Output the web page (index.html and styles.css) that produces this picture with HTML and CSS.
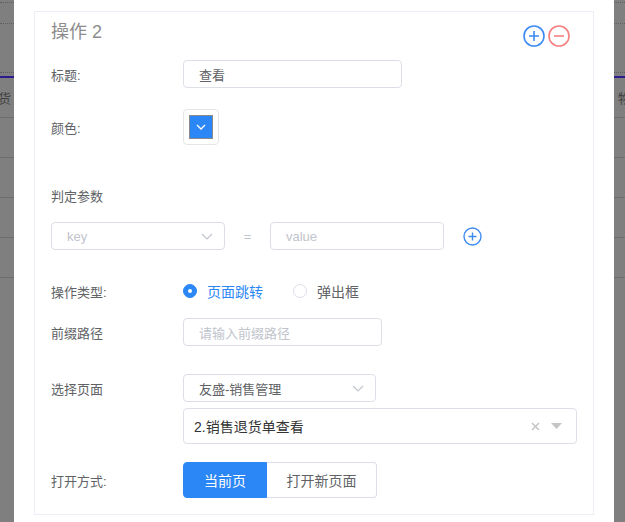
FILE: index.html
```html
<!DOCTYPE html>
<html lang="zh">
<head>
    <meta charset="UTF-8">
    <meta name="viewport" content="width=device-width, initial-scale=1.0">
    <title>操作配置</title>
    <link rel="stylesheet" href="styles.css">
</head>
<body>
<div class="screen">
    <div class="strip strip-left">
        <div class="s-dot s-h3"></div>
        <div class="s-dot s-h20"></div>
        <div class="s-dot s-h48"></div>
        <div class="s-bar"></div>
        <div class="s-row s-text">货</div>
        <div class="s-row"></div>
        <div class="s-row"></div>
        <div class="s-row"></div>
        <div class="s-row"></div>
    </div>

    <div class="modal">
        <div class="card">
            <div class="card-head">
                <span class="card-title">操作 2</span>
                <div class="head-tools">
                    <svg class="circle-btn" width="22" height="22" viewBox="0 0 22 22">
                        <circle cx="11" cy="11" r="10" fill="none" stroke="#3d8bf2" stroke-width="1.6"/>
                        <path d="M11 6v10M6 11h10" stroke="#3d8bf2" stroke-width="1.6"/>
                    </svg>
                    <svg class="circle-btn" width="22" height="22" viewBox="0 0 22 22">
                        <circle cx="11" cy="11" r="10" fill="none" stroke="#f77f7f" stroke-width="1.6"/>
                        <path d="M6 11h10" stroke="#f77f7f" stroke-width="1.6"/>
                    </svg>
                </div>
            </div>

            <div class="row r-title">
                <label class="label">标题:</label>
                <div class="input w-title"><span class="value">查看</span></div>
            </div>

            <div class="row r-color">
                <label class="label">颜色:</label>
                <div class="color-picker">
                    <div class="color-swatch">
                        <svg width="10" height="6" viewBox="0 0 10 6"><path d="M1 1l4 4 4-4" fill="none" stroke="#fff" stroke-width="1.3"/></svg>
                    </div>
                </div>
            </div>

            <div class="row r-param">
                <label class="label">判定参数</label>
            </div>

            <div class="row r-kv">
                <div class="input w-kv">
                    <span class="placeholder">key</span>
                    <svg class="chev" width="12" height="7" viewBox="0 0 12 7"><path d="M1 1l5 5 5-5" fill="none" stroke="#c0c4cc" stroke-width="1.2"/></svg>
                </div>
                <span class="equals">=</span>
                <div class="input w-kv"><span class="placeholder">value</span></div>
                <svg class="add-param" width="19" height="19" viewBox="0 0 19 19">
                    <circle cx="9.5" cy="9.5" r="8.5" fill="none" stroke="#3d8bf2" stroke-width="1.4"/>
                    <path d="M9.5 5.5v8M5.5 9.5h8" stroke="#3d8bf2" stroke-width="1.4"/>
                </svg>
            </div>

            <div class="row r-type">
                <label class="label">操作类型:</label>
                <div class="radio checked"><span class="radio-dot"></span><span>页面跳转</span></div>
                <div class="radio"><span class="radio-dot"></span><span>弹出框</span></div>
            </div>

            <div class="row r-prefix">
                <label class="label">前缀路径</label>
                <div class="input w-prefix"><span class="placeholder">请输入前缀路径</span></div>
            </div>

            <div class="row r-page">
                <label class="label">选择页面</label>
                <div class="input w-page">
                    <span class="value">友盛-销售管理</span>
                    <svg class="chev" width="12" height="7" viewBox="0 0 12 7"><path d="M1 1l5 5 5-5" fill="none" stroke="#c0c4cc" stroke-width="1.2"/></svg>
                </div>
            </div>

            <div class="row r-page2">
                <label class="label"></label>
                <div class="input big w-page2">
                    <span class="value dark">2.销售退货单查看</span>
                    <span class="big-tools">
                        <svg width="9" height="9" viewBox="0 0 9 9"><path d="M1 1l7 7M8 1l-7 7" stroke="#c5c5c5" stroke-width="1.5"/></svg>
                        <svg width="11" height="6" viewBox="0 0 11 6"><path d="M0 0h11L5.5 6z" fill="#c5c5c5"/></svg>
                    </span>
                </div>
            </div>

            <div class="row r-open">
                <label class="label">打开方式:</label>
                <div class="btn-group">
                    <div class="btn active">当前页</div>
                    <div class="btn">打开新页面</div>
                </div>
            </div>
        </div>
    </div>

    <div class="strip strip-right">
        <div class="s-dot s-h3"></div>
        <div class="s-dot s-h20"></div>
        <div class="s-dot s-h48"></div>
        <div class="s-bar"></div>
        <div class="s-row s-text">物</div>
        <div class="s-row"></div>
        <div class="s-row"></div>
        <div class="s-row"></div>
        <div class="s-row"></div>
    </div>
</div>
</body>
</html>
```

FILE: styles.css
```css
html,
body {
    margin: 0;
    padding: 0;
    background: #7f7f7f;
    font-family: "Liberation Sans", "Noto Sans CJK SC", sans-serif;
    font-size: 13px;
    color: #606266;
}

.screen {
    display: flex;
    height: 522px;
    overflow: hidden;
}

/* dimmed table behind the dialog */
.strip {
    display: flex;
    flex-direction: column;
    overflow: hidden;
    white-space: nowrap;
}
.strip-left {
    width: 14px;
}
.strip-right {
    flex: 1;
}
.s-dot {
    border-bottom: 1px dotted #5f5f5f;
}
.s-h3 { height: 2px; }
.s-h20 { height: 20px; }
.s-h48 { height: 48px; }
.s-bar {
    height: 3px;
    border-bottom: 2px solid #2b1b8f;
}
.s-row {
    height: 39px;
    border-bottom: 1px solid #6d6d6d;
    flex-shrink: 0;
}
.s-text {
    line-height: 42px;
    font-size: 13px;
    color: #3e3e3e;
}
.strip-left .s-text {
    margin-left: -2px;
}
.strip-right .s-text {
    padding-left: 4px;
}

.modal {
    width: 600px;
    flex-shrink: 0;
    background: #fff;
    padding: 11px 20px 0;
    box-sizing: border-box;
}

.card {
    border: 1px solid #ebeef5;
    padding: 0 16px 16px;
}

.card-head {
    display: flex;
    justify-content: space-between;
    height: 40px;
}
.card-title {
    font-size: 18px;
    line-height: 40px;
    color: #8c8c8c;
}
.head-tools {
    display: flex;
    gap: 3px;
    margin-top: 13px;
    margin-right: 7px;
}

.row {
    display: flex;
    align-items: center;
}
.label {
    width: 132px;
    flex-shrink: 0;
}

.r-title { margin-top: 8px; }
.r-color { margin-top: 21px; }
.r-param { margin-top: 40px; height: 20px; }
.r-kv { margin-top: 17px; }
.r-type { margin-top: 31px; height: 20px; }
.r-prefix { margin-top: 17px; }
.r-page { margin-top: 28px; }
.r-page2 { margin-top: 6px; }
.r-open { margin-top: 18px; }

.input {
    height: 28px;
    box-sizing: border-box;
    border: 1px solid #dcdfe6;
    border-radius: 4px;
    padding: 0 15px;
    display: flex;
    align-items: center;
    justify-content: space-between;
}
.input.big {
    height: 36px;
    padding: 0 14px 0 10px;
}
.w-title { width: 219px; }
.w-kv { width: 174px; }
.w-prefix { width: 199px; }
.w-page { width: 193px; }
.w-page2 { width: 394px; }

.value {
    color: #606266;
}
.value.dark {
    font-size: 14px;
    color: #333;
}
.placeholder {
    color: #c0c4cc;
}
.chev {
    margin-right: -4px;
}

.big-tools {
    display: flex;
    align-items: center;
    gap: 11px;
}

.equals {
    width: 45px;
    text-align: center;
    color: #c0c4cc;
}
.add-param {
    margin-left: 19px;
}

.color-picker {
    width: 36px;
    height: 36px;
    box-sizing: border-box;
    border: 1px solid #e6e6e6;
    border-radius: 4px;
    padding: 5px;
}
.color-swatch {
    width: 100%;
    height: 100%;
    box-sizing: border-box;
    border: 1px solid #8a8a8a;
    background: #2b87f5;
    display: flex;
    align-items: center;
    justify-content: center;
}

.radio {
    display: flex;
    align-items: center;
    gap: 10px;
    margin-right: 30px;
    font-size: 14px;
    color: #606266;
}
.radio-dot {
    width: 14px;
    height: 14px;
    box-sizing: border-box;
    border: 1px solid #dcdfe6;
    border-radius: 50%;
    display: flex;
    align-items: center;
    justify-content: center;
}
.radio.checked {
    color: #2b87f5;
}
.radio.checked .radio-dot {
    background: #2b87f5;
    border-color: #2b87f5;
}
.radio.checked .radio-dot::after {
    content: "";
    width: 4px;
    height: 4px;
    border-radius: 50%;
    background: #fff;
}

.btn-group {
    display: flex;
}
.btn {
    height: 36px;
    box-sizing: border-box;
    border: 1px solid #dcdfe6;
    display: flex;
    align-items: center;
    justify-content: center;
    font-size: 14px;
    color: #606266;
}
.btn:first-child {
    width: 84px;
    border-radius: 4px 0 0 4px;
}
.btn:last-child {
    width: 110px;
    border-left: 0;
    border-radius: 0 4px 4px 0;
}
.btn.active {
    background: #2b87f5;
    border-color: #2b87f5;
    color: #fff;
}
```
